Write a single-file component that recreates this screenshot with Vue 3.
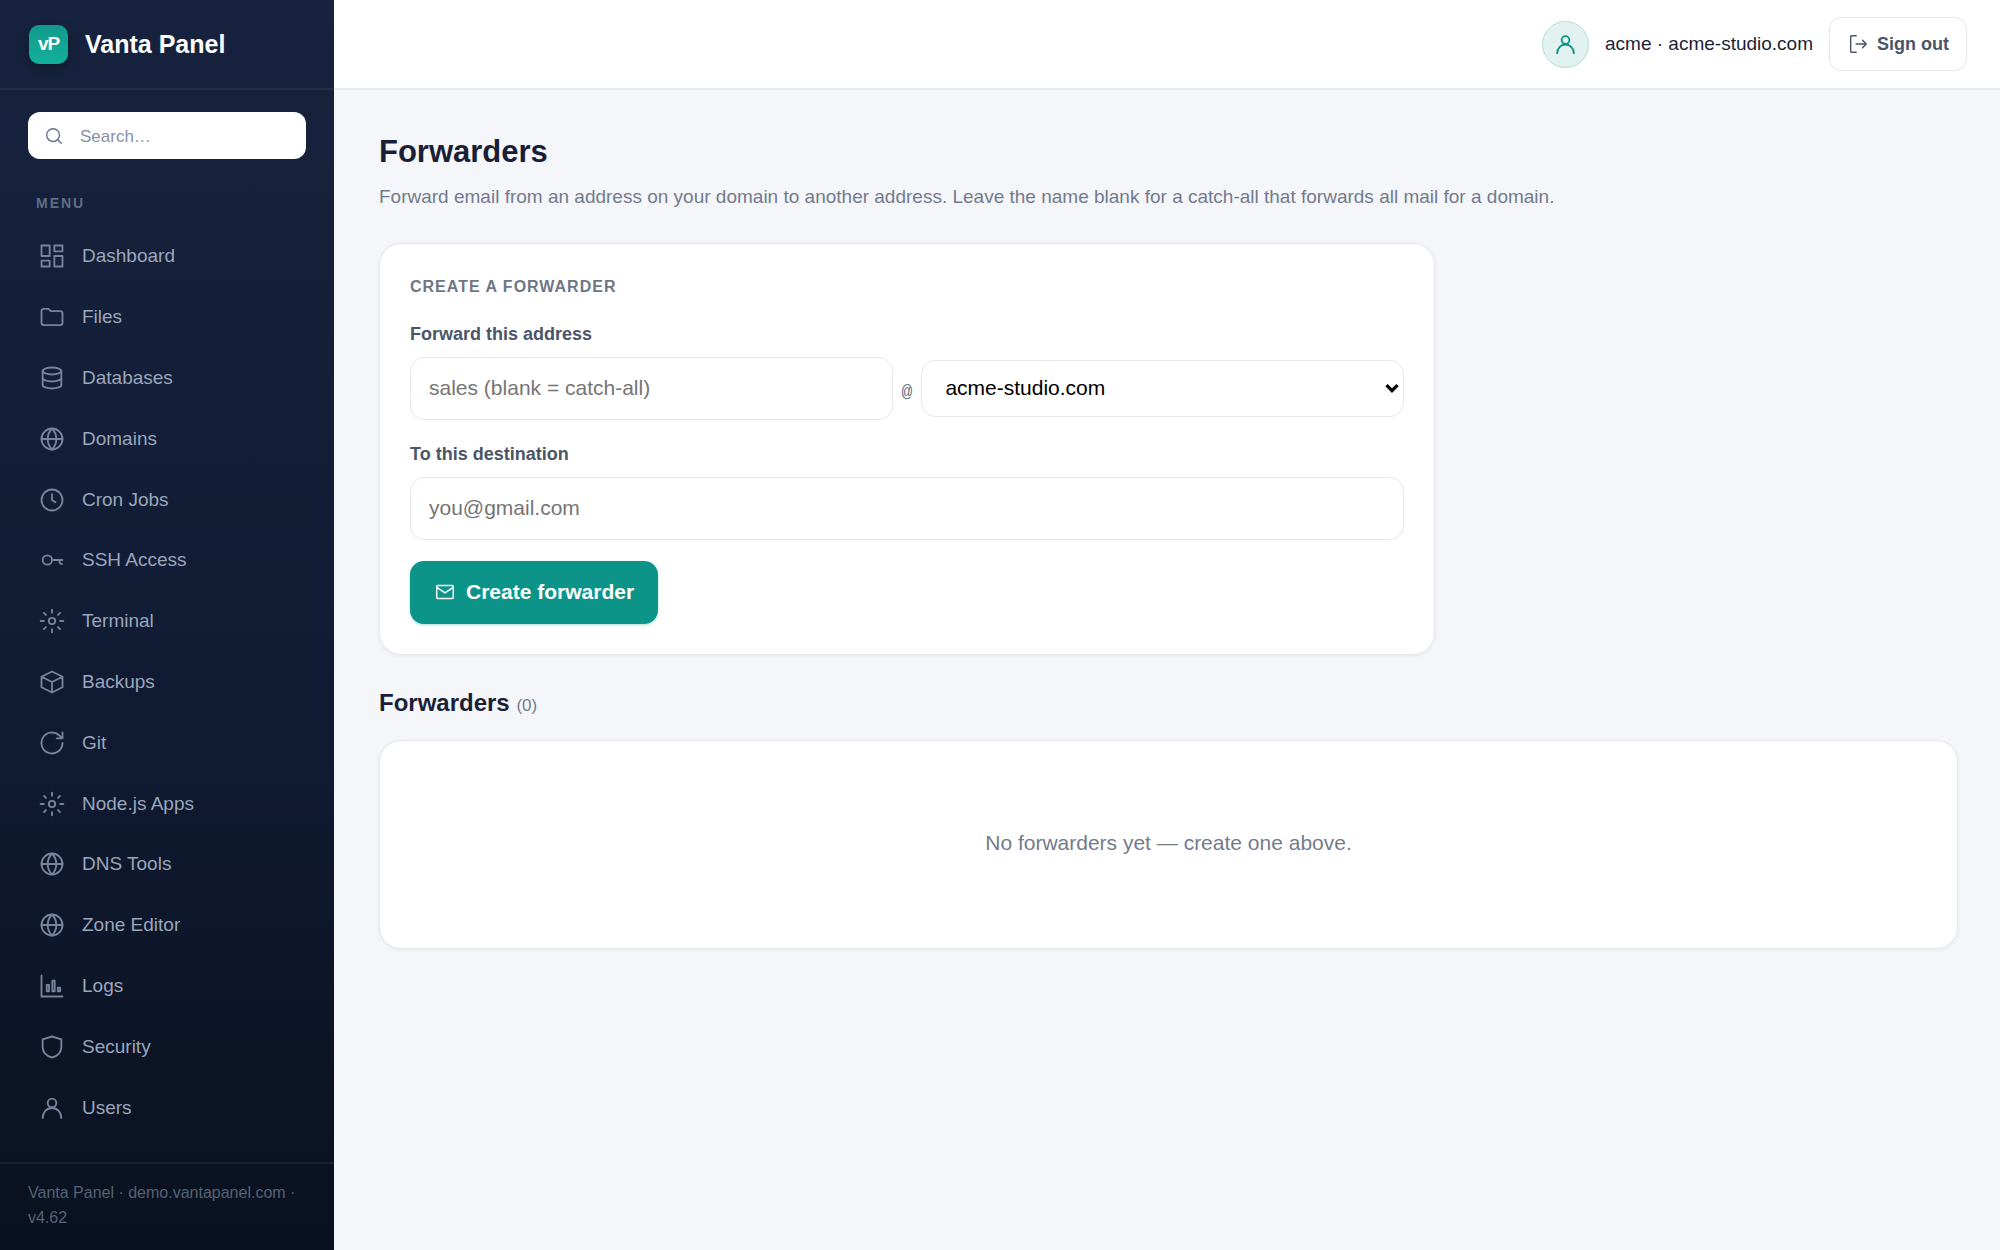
<script setup>
import { ref } from 'vue'

const icons = {
  dashboard: '<rect x="3" y="3" width="7" height="9"/><rect x="14" y="3" width="7" height="5"/><rect x="14" y="12" width="7" height="9"/><rect x="3" y="16" width="7" height="5"/>',
  folder: '<path d="M3 7a2 2 0 0 1 2-2h4l2 2h8a2 2 0 0 1 2 2v8a2 2 0 0 1-2 2H5a2 2 0 0 1-2-2z"/>',
  database: '<ellipse cx="12" cy="6" rx="8" ry="3"/><path d="M4 6v12c0 1.7 3.6 3 8 3s8-1.3 8-3V6M4 12c0 1.7 3.6 3 8 3s8-1.3 8-3"/>',
  globe: '<circle cx="12" cy="12" r="9"/><path d="M3 12h18M12 3c2.400 2.500 3.700 5.600 3.700 9s-1.300 6.500-3.700 9c-2.400-2.500-3.700-5.600-3.700-9s1.300-6.500 3.700-9z"/>',
  clock: '<circle cx="12" cy="12" r="9"/><path d="M12 7v5l3 2"/>',
  key: '<circle cx="8" cy="12" r="4"/><path d="M12 12h9M18.500 12v2.500l2 1"/>',
  gear: '<circle cx="12" cy="12" r="2.700"/><path d="M12 2.300v2.700M12 19v2.700M2.300 12H5M19 12h2.700M5.100 5.100l1.700 1.700M17.200 17.200l1.700 1.700M5.100 18.900l1.700-1.700M17.200 6.800l1.700-1.700"/>',
  box: '<path d="M12 3l9 4.500v9L12 21l-9-4.500v-9zM3 7.500l9 4.500 9-4.500M12 12v9"/>',
  refresh: '<path d="M21 12a9 9 0 1 1-3-6.700L21 8M21 3v5h-5"/>',
  chart: '<path d="M3 3v18h18"/><rect x="7.500" y="11" width="2" height="5.500"/><rect x="12.300" y="7.500" width="2" height="9"/><rect x="17" y="13.500" width="2" height="3"/>',
  shield: '<path d="M12 3l8 2.500v6.500c0 4.500-3.300 7.800-8 9-4.700-1.200-8-4.500-8-9V5.500z"/>',
  user: '<circle cx="12" cy="7.700" r="3.700"/><path d="M4 20.500c0-4.800 3.400-8.500 8-8.500s8 3.700 8 8.500"/>',
}

const menu = [
  ['Dashboard', 'dashboard'],
  ['Files', 'folder'],
  ['Databases', 'database'],
  ['Domains', 'globe'],
  ['Cron Jobs', 'clock'],
  ['SSH Access', 'key'],
  ['Terminal', 'gear'],
  ['Backups', 'box'],
  ['Git', 'refresh'],
  ['Node.js Apps', 'gear'],
  ['DNS Tools', 'globe'],
  ['Zone Editor', 'globe'],
  ['Logs', 'chart'],
  ['Security', 'shield'],
  ['Users', 'user'],
]

const query = ref('')
const localPart = ref('')
const domain = ref('acme-studio.com')
const destination = ref('')
</script>

<template>
  <div class="layout">
    <aside class="sidebar">
      <div class="brand">
        <span class="logo">vP</span>
        <span class="brand-name">Vanta Panel</span>
      </div>
      <label class="search">
        <svg class="icon-sm" viewBox="0 0 24 24" aria-hidden="true"><circle cx="11" cy="11" r="7" /><path d="M20 20l-4-4" /></svg>
        <input v-model="query" type="search" placeholder="Search…" aria-label="Search" />
      </label>
      <div class="menu-title">MENU</div>
      <nav class="menu">
        <a v-for="[name, icon] in menu" :key="name" href="#">
          <svg class="icon-lg" viewBox="0 0 24 24" aria-hidden="true" v-html="icons[icon]"></svg>
          <span>{{ name }}</span>
        </a>
      </nav>
      <footer class="side-footer">Vanta Panel · demo.vantapanel.com · v4.62</footer>
    </aside>

    <div class="page">
      <header class="topbar">
        <span class="avatar"><svg class="icon-md" viewBox="0 0 24 24" aria-hidden="true" v-html="icons.user"></svg></span>
        <span class="account">acme · acme-studio.com</span>
        <button class="sign-out" type="button">
          <svg class="icon-sm" viewBox="0 0 24 24" aria-hidden="true"><path d="M10 3H5a1 1 0 0 0-1 1v16a1 1 0 0 0 1 1h5M10 12h11M17 8l4 4-4 4" /></svg>
          Sign out
        </button>
      </header>

      <main class="content">
        <h1>Forwarders</h1>
        <p class="lead">Forward email from an address on your domain to another address. Leave the name blank for a catch-all that forwards all mail for a domain.</p>

        <form class="card create" @submit.prevent>
          <h3>CREATE A FORWARDER</h3>
          <div class="field">
            <label for="local-part">Forward this address</label>
            <div class="address">
              <input id="local-part" v-model="localPart" type="text" placeholder="sales (blank = catch-all)" />
              <span class="at">@</span>
              <div class="select">
                <select v-model="domain" aria-label="Domain">
                  <option>acme-studio.com</option>
                </select>
                <svg viewBox="0 0 14 10" aria-hidden="true"><path d="M2 2l5 5 5-5" /></svg>
              </div>
            </div>
          </div>
          <div class="field">
            <label for="destination">To this destination</label>
            <input id="destination" v-model="destination" type="email" placeholder="you@gmail.com" />
          </div>
          <button class="primary" type="submit">
            <svg class="icon-sm" viewBox="0 0 24 24" aria-hidden="true"><rect x="3" y="5" width="18" height="14" rx="1" /><path d="M3 7l9 6 9-6" /></svg>
            Create forwarder
          </button>
        </form>

        <h2>Forwarders <small>(0)</small></h2>
        <section class="card empty">No forwarders yet — create one above.</section>
      </main>
    </div>
  </div>
</template>

<style>
body {
  margin: 0;
  background: #f4f6fa;
}
</style>

<style scoped>
* {
  box-sizing: border-box;
}
.layout {
  display: flex;
  min-height: 100vh;
  font-family: "Liberation Sans", Arial, sans-serif;
  color: #1a1f36;
}
svg {
  flex: none;
  fill: none;
  stroke: currentColor;
  stroke-width: 1.6;
  stroke-linecap: round;
  stroke-linejoin: round;
}
.icon-sm { width: 22px; height: 22px; }
.icon-md { width: 25px; height: 25px; stroke-width: 1.8; }
.icon-lg { width: 28px; height: 28px; color: #77849c; }

input,
select,
button {
  font: inherit;
  outline: none;
}

.sidebar {
  flex: none;
  display: flex;
  flex-direction: column;
  width: 334px;
  background: linear-gradient(180deg, #17233e 0%, #111c35 50%, #0a1120 100%);
}
.brand {
  display: flex;
  align-items: center;
  gap: 17px;
  height: 90px;
  padding: 0 29px;
  border-bottom: 2px solid #222d47;
}
.logo {
  display: grid;
  place-items: center;
  width: 39px;
  height: 39px;
  border-radius: 10px;
  background: linear-gradient(180deg, #129a8c, #14b09c);
  box-shadow: 0 3px 10px rgba(0, 0, 0, 0.35);
  color: #fff;
  font-size: 19px;
  font-weight: 700;
  letter-spacing: -1px;
}
.brand-name {
  color: #fff;
  font-size: 25px;
  font-weight: 700;
}
.search {
  display: flex;
  align-items: center;
  gap: 15px;
  height: 47px;
  margin: 22px 28px 34px;
  padding: 0 15px;
  border-radius: 12px;
  background: #fff;
  color: #6b7690;
}
.search input {
  flex: 1;
  min-width: 0;
  padding: 2px 0 0;
  border: 0;
  background: none;
  font-size: 17px;
  color: #1a1f36;
}
.search input::placeholder {
  color: #8791a9;
}
.menu-title {
  padding: 0 36px;
  color: #606d86;
  font-size: 14px;
  font-weight: 700;
  line-height: 20px;
  letter-spacing: 2px;
}
.menu {
  flex: 1;
  display: grid;
  grid-auto-rows: 1fr;
  margin: 13px 17px 24px;
}
.menu a {
  display: flex;
  align-items: center;
  gap: 16px;
  min-height: 44px;
  padding: 0 21px;
  color: #9aa6ba;
  font-size: 19px;
  text-decoration: none;
}
.side-footer {
  padding: 16px 28px 20px;
  border-top: 2px solid #18202f;
  color: #566174;
  font-size: 16px;
  line-height: 25px;
}

.page {
  flex: 1;
  min-width: 0;
}
.topbar {
  display: flex;
  align-items: center;
  justify-content: flex-end;
  gap: 16px;
  height: 90px;
  padding: 0 33px;
  border-bottom: 2px solid #e8ebef;
  background: #fff;
}
.avatar {
  display: grid;
  place-items: center;
  width: 47px;
  height: 47px;
  border: 1px solid #b4ddd8;
  border-radius: 50%;
  background: #e1f2f0;
  color: #0d9488;
}
.account {
  font-size: 19px;
}
.sign-out {
  display: flex;
  align-items: center;
  gap: 8px;
  height: 54px;
  padding: 0 17px;
  border: 1px solid #e4e7ec;
  border-radius: 12px;
  background: #fff;
  color: #4a5568;
  font-size: 18px;
  font-weight: 700;
}

.content {
  padding: 42px 42px 44px 45px;
}
h1,
h2,
h3,
p {
  margin: 0;
}
h1 {
  font-size: 31px;
  line-height: 40px;
}
.lead {
  margin: 11px 0 32px;
  color: #737b8c;
  font-size: 19px;
  line-height: 28px;
}
.card {
  border: 1px solid #e6e8ec;
  border-radius: 22px;
  background: #fff;
  box-shadow: 0 1px 4px rgba(16, 24, 40, 0.06);
}
.create {
  display: flex;
  flex-direction: column;
  align-items: stretch;
  gap: 21px;
  max-width: 1056px;
  padding: 30px;
}
h3 {
  color: #6e7686;
  font-size: 16px;
  line-height: 26px;
  letter-spacing: 1px;
}
.field {
  display: flex;
  flex-direction: column;
  gap: 10px;
}
.field label {
  color: #4a5568;
  font-size: 18px;
  font-weight: 700;
  line-height: 26px;
}
.field input,
.select select {
  width: 100%;
  border: 1px solid #e4e7ec;
  border-radius: 14px;
  background: #fff;
  font-size: 21px;
}
.field input {
  height: 63px;
  padding: 0 18px 2px;
}
.field input::placeholder {
  color: #757575;
}
.address {
  display: grid;
  grid-template-columns: minmax(0, 1fr) auto minmax(0, 1fr);
  align-items: center;
  gap: 9px;
}
.at {
  padding-top: 6px;
  color: #6e7686;
  font-family: "Liberation Mono", monospace;
  font-size: 18px;
}
.select {
  position: relative;
}
.select select {
  display: block;
  height: 57px;
  padding: 0 40px 2px 23px;
  appearance: none;
  color: #000;
}
.select svg {
  position: absolute;
  top: 23px;
  right: 4px;
  width: 16px;
  height: 11px;
  color: #000;
  stroke-width: 3;
  stroke-linecap: butt;
  stroke-linejoin: miter;
  pointer-events: none;
}
.primary {
  display: flex;
  align-self: flex-start;
  align-items: center;
  gap: 10px;
  height: 63px;
  padding: 0 24px 2px;
  border: 0;
  border-radius: 14px;
  background: #0d9488;
  box-shadow: 0 1px 3px rgba(13, 148, 136, 0.35);
  color: #fff;
  font-size: 21px;
  font-weight: 700;
}
h2 {
  margin: 32px 0 18px;
  font-size: 24px;
  line-height: 32px;
}
h2 small {
  color: #737b8c;
  font-size: 17px;
  font-weight: 400;
}
.empty {
  padding: 86px 30px 89px;
  color: #737b8c;
  font-size: 21px;
  line-height: 32px;
  text-align: center;
}
</style>
